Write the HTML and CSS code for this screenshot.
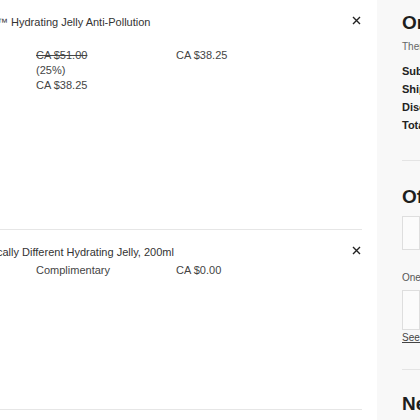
FILE: index.html
```html
<!DOCTYPE html>
<html>
<head>
<meta charset="utf-8">
<link rel="stylesheet" href="styles.css">
</head>
<body>
<div class="page">
  <main class="cart">
    <section class="item item-first">
      <div class="item-head">
        <div class="item-title">™ Hydrating Jelly Anti-Pollution</div>
        <button class="remove" aria-label="Remove">
          <svg width="9" height="9" viewBox="0 0 9 9"><path d="M1 1L8 8M8 1L1 8" stroke="#222" stroke-width="1.4" fill="none"/></svg>
        </button>
      </div>
      <div class="prices">
        <div class="col-price">
          <div class="old">CA $51.00</div>
          <div>(25%)</div>
          <div>CA $38.25</div>
        </div>
        <div class="col-total">CA $38.25</div>
      </div>
    </section>
    <section class="item item-second">
      <div class="item-head">
        <div class="item-title">cally Different Hydrating Jelly, 200ml</div>
        <button class="remove" aria-label="Remove">
          <svg width="9" height="9" viewBox="0 0 9 9"><path d="M1 1L8 8M8 1L1 8" stroke="#222" stroke-width="1.4" fill="none"/></svg>
        </button>
      </div>
      <div class="prices prices-tight">
        <div class="col-price">Complimentary</div>
        <div class="col-total">CA $0.00</div>
      </div>
    </section>
  </main>
  <aside class="summary">
    <h2 class="heading">Order Summary</h2>
    <p class="note">There are 2 items in your bag</p>
    <div class="rows">
      <div class="row">Subtotal</div>
      <div class="row">Shipping</div>
      <div class="row">Discount</div>
      <div class="row">Total</div>
    </div>
    <hr class="rule rule-a">
    <h2 class="heading heading-offers">Offers</h2>
    <div class="box box-code"></div>
    <p class="note note-one">One offer code per order</p>
    <div class="box box-samples"></div>
    <a class="see" href="#">See details</a>
    <hr class="rule rule-b">
    <h2 class="heading heading-new">Need help?</h2>
  </aside>
</div>
</body>
</html>
```

FILE: styles.css
```css
html, body {
  margin: 0;
  padding: 0;
  width: 420px;
  height: 420px;
  overflow: hidden;
  background: #fff;
  font-family: "Liberation Sans", Arial, sans-serif;
}

.page {
  display: flex;
  width: 420px;
  height: 420px;
}

.cart {
  width: 362px;
  flex: 0 0 362px;
  margin-right: 15px;
}

.item {
  border-bottom: 1px solid #e6e6e6;
  color: #444;
  font-size: 11px;
  line-height: 15px;
}

.item-first {
  height: 214px;
  padding-top: 15px;
}

.item-second {
  height: 164px;
  padding-top: 15px;
}

.item-head {
  display: flex;
  justify-content: space-between;
  align-items: center;
}

.item-title {
  color: #333;
  margin-left: -3px;
  white-space: nowrap;
}

.remove {
  border: 0;
  background: none;
  padding: 0;
  margin-right: 1px;
  width: 9px;
  height: 9px;
  display: flex;
  margin-top: -5px;
}

.prices {
  display: grid;
  grid-template-columns: 140px 1fr;
  padding-left: 36px;
  margin-top: 18px;
}

.prices-tight {
  margin-top: 3px;
}

.old {
  text-decoration: line-through;
}

.summary {
  flex: 1;
  background: #f8f8f8;
  padding: 12px 0 0 25px;
  white-space: nowrap;
  overflow: hidden;
  color: #222;
}

.heading {
  margin: 0;
  font-size: 19px;
  line-height: 22px;
  font-weight: bold;
  color: #1e1e1e;
}

.note {
  margin: 6px 0 0;
  font-size: 10px;
  line-height: 14px;
  color: #666;
}

.rows {
  margin-top: 8px;
}

.row {
  font-size: 11px;
  line-height: 18px;
  font-weight: bold;
  color: #222;
}

.rule {
  border: 0;
  border-top: 1px solid #e4e4e4;
  margin: 0;
}

.rule-a {
  margin-top: 26px;
}

.heading-offers {
  margin-top: 25px;
}

.box {
  border: 1px solid #dedede;
  background: #fbfbfb;
  box-sizing: border-box;
}

.box-code {
  margin-top: 8px;
  height: 34px;
}

.note-one {
  margin-top: 21px;
  color: #555;
}

.box-samples {
  margin-top: 5px;
  height: 40px;
}

.see {
  display: block;
  margin-top: 1px;
  font-size: 10px;
  line-height: 14px;
  color: #444;
  text-decoration: underline;
}

.rule-b {
  margin-top: 24px;
}

.heading-new {
  margin-top: 23px;
}
```
